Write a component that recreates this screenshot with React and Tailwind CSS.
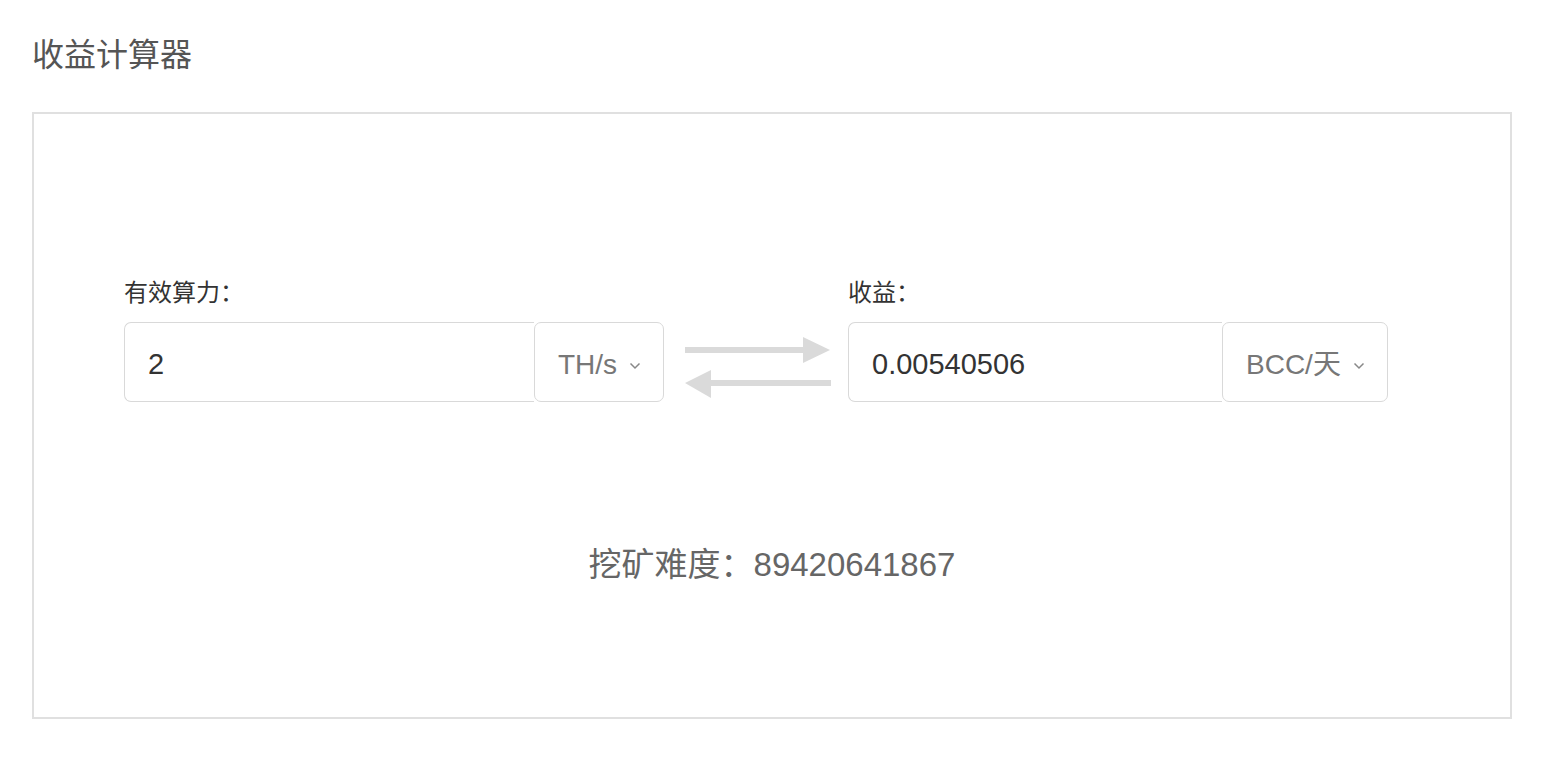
import React from "react";

const font = { fontFamily: '"Liberation Sans", Arial, "Noto Sans CJK SC", sans-serif' };

function Chevron() {
  return (
    <svg width="12" height="8" viewBox="0 0 12 8" className="ml-[12px] mt-[2px]">
      <path d="M1.5 1.5 L6 6 L10.5 1.5" fill="none" stroke="#888" strokeWidth="1.5" />
    </svg>
  );
}

function Field({ label, value, unit, unitW }) {
  return (
    <div className="flex flex-col w-[540px]">
      <div className="text-[24px] leading-[32px] text-[#333] mb-[13px]">{label}</div>
      <div className="flex h-[80px]">
        <div className="flex-1 flex items-center pl-[23px] pt-[5px] border-[1.5px] border-r-0 border-[#d9d9d9] rounded-l-[7px] text-[29px] text-[#333] bg-white">
          {value}
        </div>
        <div
          className="flex items-center pl-[23px] pt-[5px] border-[1.5px] border-[#d9d9d9] rounded-[7px] text-[28px] text-[#777] bg-white"
          style={{ width: unitW }}
        >
          {unit}
          <Chevron />
        </div>
      </div>
    </div>
  );
}

function Arrows() {
  return (
    <svg width="148" height="66" viewBox="0 0 148 66" className="mt-[58px]">
      <rect x="1" y="12" width="121" height="6" fill="#dadada" />
      <polygon points="119,2 146,15 119,28" fill="#dadada" />
      <rect x="25" y="45" width="122" height="6" fill="#dadada" />
      <polygon points="27,35 1,48 27,63" fill="#dadada" />
    </svg>
  );
}

export default function App() {
  return (
    <div className="w-[1548px] h-[780px] bg-white pl-[32px] pt-[33px]" style={font}>
      <div className="text-[32px] leading-[44px] text-[#555]">收益计算器</div>
      <div className="mt-[35px] w-[1480px] h-[607px] border-2 border-[#e0e0e0] flex flex-col">
        <div className="flex pt-[163px] pl-[90px]">
          <Field label="有效算力：" value="2" unit="TH/s" unitW="130px" />
          <div className="ml-[20px] mr-[16px]">
            <Arrows />
          </div>
          <Field label="收益：" value="0.00540506" unit="BCC/天" unitW="166px" />
        </div>
        <div className="mt-[140px] text-center text-[33px] leading-[46px] text-[#666]">
          挖矿难度：89420641867
        </div>
      </div>
    </div>
  );
}
